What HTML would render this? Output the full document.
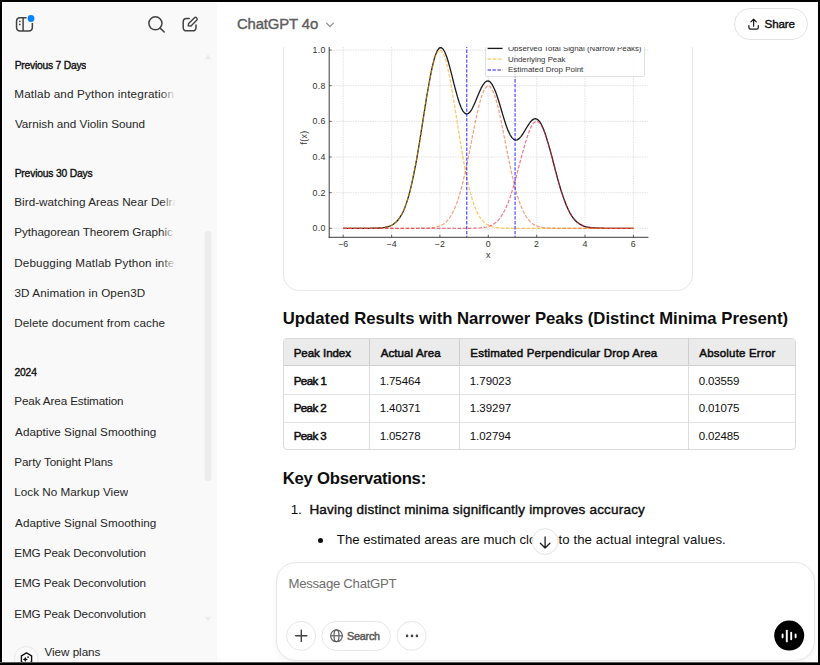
<!DOCTYPE html>
<html><head><meta charset="utf-8">
<style>
*{box-sizing:border-box;margin:0;padding:0}
html,body{width:820px;height:665px;overflow:hidden;background:#000}
body{font-family:"Liberation Sans",sans-serif;position:relative;color:#0d0d0d}
.a{position:absolute;white-space:nowrap}
#frame{left:2px;top:2px;width:816px;height:660px;background:#fff;overflow:hidden}
#side{left:2px;top:2px;width:215px;height:660px;background:#f9f9f9;overflow:hidden;border-left:1px solid #fff;border-top:1px solid #fff}
.sh{font-size:11px;font-weight:700;color:#0d0d0d;left:14.5px;line-height:12px}
.si{font-size:13px;color:#0d0d0d;left:14.5px;line-height:14px}
.fade{position:absolute;left:161px;width:17px;height:20px;background:linear-gradient(90deg,rgba(249,249,249,0),#f9f9f9 88%)}
#hdr{left:217px;top:2px;width:601px;height:45px;background:#fff}
.gr{stroke:#cfcfcf;stroke-width:0.8;stroke-dasharray:.8 .9;fill:none}
.tot{stroke:#1a1a1a;stroke-width:1.3;fill:none;stroke-linejoin:round}
.pk{stroke-width:1.25;fill:none;stroke-dasharray:3.6 1.6;opacity:.62}
.dp{stroke:#0000ff;stroke-width:1.4;stroke-dasharray:3.4 1.5;opacity:.6}
.sp{stroke:#3c3c3c;stroke-width:1}
.tk{stroke:#3c3c3c;stroke-width:.8}
.tl{font-family:"Liberation Sans",sans-serif;font-size:8.8px;letter-spacing:.3px;fill:#333}
.lg{font-family:"Liberation Sans",sans-serif;font-size:7.7px;fill:#333}
h2{font-size:18px;font-weight:700}
table{border-collapse:separate;border-spacing:0}
</style></head><body>
<div id="frame" class="a"></div>

<!-- chart card -->
<div class="a" style="left:283px;top:20px;width:410px;height:271px;border:1px solid #e8e8e8;border-radius:16px;background:#fff"></div>
<svg class="a" style="left:0;top:0" width="820" height="665" viewBox="0 0 820 665">
<line x1="343.2" y1="30" x2="343.2" y2="237.3" class="gr"/>
<line x1="391.6" y1="30" x2="391.6" y2="237.3" class="gr"/>
<line x1="439.9" y1="30" x2="439.9" y2="237.3" class="gr"/>
<line x1="488.3" y1="30" x2="488.3" y2="237.3" class="gr"/>
<line x1="536.7" y1="30" x2="536.7" y2="237.3" class="gr"/>
<line x1="585.0" y1="30" x2="585.0" y2="237.3" class="gr"/>
<line x1="633.4" y1="30" x2="633.4" y2="237.3" class="gr"/>
<line x1="329.2" y1="228.3" x2="648.4" y2="228.3" class="gr"/>
<line x1="329.2" y1="192.7" x2="648.4" y2="192.7" class="gr"/>
<line x1="329.2" y1="157.0" x2="648.4" y2="157.0" class="gr"/>
<line x1="329.2" y1="121.4" x2="648.4" y2="121.4" class="gr"/>
<line x1="329.2" y1="85.7" x2="648.4" y2="85.7" class="gr"/>
<line x1="329.2" y1="50.1" x2="648.4" y2="50.1" class="gr"/>
<path d="M343.2,228.3 L345.0,228.3 L346.8,228.3 L348.7,228.3 L350.5,228.3 L352.3,228.3 L354.1,228.3 L355.9,228.3 L357.7,228.3 L359.5,228.3 L361.4,228.3 L363.2,228.3 L365.0,228.3 L366.8,228.3 L368.6,228.3 L370.4,228.3 L372.2,228.2 L374.0,228.2 L375.9,228.2 L377.7,228.1 L379.5,228.0 L381.3,227.9 L383.1,227.7 L384.9,227.4 L386.7,227.0 L388.6,226.5 L390.4,225.9 L392.2,225.0 L394.0,223.8 L395.8,222.3 L397.6,220.5 L399.4,218.1 L401.3,215.2 L403.1,211.7 L404.9,207.4 L406.7,202.4 L408.5,196.5 L410.3,189.8 L412.1,182.1 L413.9,173.5 L415.8,164.1 L417.6,153.8 L419.4,143.0 L421.2,131.7 L423.0,120.1 L424.8,108.6 L426.6,97.2 L428.5,86.5 L430.3,76.5 L432.1,67.7 L433.9,60.3 L435.7,54.4 L437.5,50.3 L439.3,48.0 L441.1,47.6 L443.0,49.0 L444.8,52.0 L446.6,56.5 L448.4,62.2 L450.2,68.8 L452.0,75.9 L453.8,83.2 L455.7,90.3 L457.5,96.9 L459.3,102.8 L461.1,107.5 L462.9,111.1 L464.7,113.2 L466.5,114.1 L468.4,113.5 L470.2,111.8 L472.0,109.0 L473.8,105.3 L475.6,101.2 L477.4,96.8 L479.2,92.4 L481.0,88.4 L482.9,85.1 L484.7,82.6 L486.5,81.2 L488.3,80.9 L490.1,81.9 L491.9,84.1 L493.7,87.5 L495.6,91.8 L497.4,97.0 L499.2,102.8 L501.0,108.8 L502.8,114.9 L504.6,120.8 L506.4,126.2 L508.2,130.9 L510.1,134.8 L511.9,137.6 L513.7,139.4 L515.5,140.2 L517.3,139.9 L519.1,138.6 L520.9,136.6 L522.8,134.0 L524.6,131.1 L526.4,128.0 L528.2,125.1 L530.0,122.5 L531.8,120.4 L533.6,119.1 L535.5,118.7 L537.3,119.3 L539.1,120.9 L540.9,123.5 L542.7,127.2 L544.5,131.7 L546.3,137.1 L548.1,143.1 L550.0,149.6 L551.8,156.4 L553.6,163.4 L555.4,170.3 L557.2,177.1 L559.0,183.6 L560.8,189.7 L562.7,195.4 L564.5,200.6 L566.3,205.2 L568.1,209.2 L569.9,212.8 L571.7,215.8 L573.5,218.3 L575.3,220.5 L577.2,222.2 L579.0,223.6 L580.8,224.7 L582.6,225.6 L584.4,226.3 L586.2,226.8 L588.0,227.2 L589.9,227.5 L591.7,227.8 L593.5,227.9 L595.3,228.0 L597.1,228.1 L598.9,228.2 L600.7,228.2 L602.6,228.2 L604.4,228.3 L606.2,228.3 L608.0,228.3 L609.8,228.3 L611.6,228.3 L613.4,228.3 L615.2,228.3 L617.1,228.3 L618.9,228.3 L620.7,228.3 L622.5,228.3 L624.3,228.3 L626.1,228.3 L627.9,228.3 L629.8,228.3 L631.6,228.3 L633.4,228.3" class="tot"/>
<path d="M343.2,228.3 L345.0,228.3 L346.8,228.3 L348.7,228.3 L350.5,228.3 L352.3,228.3 L354.1,228.3 L355.9,228.3 L357.7,228.3 L359.5,228.3 L361.4,228.3 L363.2,228.3 L365.0,228.3 L366.8,228.3 L368.6,228.3 L370.4,228.3 L372.2,228.2 L374.0,228.2 L375.9,228.2 L377.7,228.1 L379.5,228.0 L381.3,227.9 L383.1,227.7 L384.9,227.4 L386.7,227.0 L388.6,226.5 L390.4,225.9 L392.2,225.0 L394.0,223.8 L395.8,222.3 L397.6,220.5 L399.4,218.1 L401.3,215.2 L403.1,211.7 L404.9,207.4 L406.7,202.4 L408.5,196.5 L410.3,189.8 L412.1,182.1 L413.9,173.5 L415.8,164.1 L417.6,153.9 L419.4,143.0 L421.2,131.8 L423.0,120.2 L424.8,108.7 L426.6,97.4 L428.5,86.7 L430.3,76.9 L432.1,68.3 L433.9,61.1 L435.7,55.6 L437.5,51.9 L439.3,50.2 L441.1,50.6 L443.0,52.9 L444.8,57.2 L446.6,63.3 L448.4,71.0 L450.2,80.1 L452.0,90.2 L453.8,101.1 L455.7,112.5 L457.5,124.1 L459.3,135.6 L461.1,146.7 L462.9,157.3 L464.7,167.3 L466.5,176.5 L468.4,184.7 L470.2,192.1 L472.0,198.6 L473.8,204.2 L475.6,208.9 L477.4,212.9 L479.2,216.3 L481.0,219.0 L482.9,221.1 L484.7,222.9 L486.5,224.2 L488.3,225.3 L490.1,226.1 L491.9,226.7 L493.7,227.2 L495.6,227.5 L497.4,227.7 L499.2,227.9 L501.0,228.0 L502.8,228.1 L504.6,228.2 L506.4,228.2 L508.2,228.2 L510.1,228.3 L511.9,228.3 L513.7,228.3 L515.5,228.3 L517.3,228.3 L519.1,228.3 L520.9,228.3 L522.8,228.3 L524.6,228.3 L526.4,228.3 L528.2,228.3 L530.0,228.3 L531.8,228.3 L533.6,228.3 L535.5,228.3 L537.3,228.3 L539.1,228.3 L540.9,228.3 L542.7,228.3 L544.5,228.3 L546.3,228.3 L548.1,228.3 L550.0,228.3 L551.8,228.3 L553.6,228.3 L555.4,228.3 L557.2,228.3 L559.0,228.3 L560.8,228.3 L562.7,228.3 L564.5,228.3 L566.3,228.3 L568.1,228.3 L569.9,228.3 L571.7,228.3 L573.5,228.3 L575.3,228.3 L577.2,228.3 L579.0,228.3 L580.8,228.3 L582.6,228.3 L584.4,228.3 L586.2,228.3 L588.0,228.3 L589.9,228.3 L591.7,228.3 L593.5,228.3 L595.3,228.3 L597.1,228.3 L598.9,228.3 L600.7,228.3 L602.6,228.3 L604.4,228.3 L606.2,228.3 L608.0,228.3 L609.8,228.3 L611.6,228.3 L613.4,228.3 L615.2,228.3 L617.1,228.3 L618.9,228.3 L620.7,228.3 L622.5,228.3 L624.3,228.3 L626.1,228.3 L627.9,228.3 L629.8,228.3 L631.6,228.3 L633.4,228.3" class="pk" stroke="#ffa500"/>
<path d="M343.2,228.3 L345.0,228.3 L346.8,228.3 L348.7,228.3 L350.5,228.3 L352.3,228.3 L354.1,228.3 L355.9,228.3 L357.7,228.3 L359.5,228.3 L361.4,228.3 L363.2,228.3 L365.0,228.3 L366.8,228.3 L368.6,228.3 L370.4,228.3 L372.2,228.3 L374.0,228.3 L375.9,228.3 L377.7,228.3 L379.5,228.3 L381.3,228.3 L383.1,228.3 L384.9,228.3 L386.7,228.3 L388.6,228.3 L390.4,228.3 L392.2,228.3 L394.0,228.3 L395.8,228.3 L397.6,228.3 L399.4,228.3 L401.3,228.3 L403.1,228.3 L404.9,228.3 L406.7,228.3 L408.5,228.3 L410.3,228.3 L412.1,228.3 L413.9,228.3 L415.8,228.3 L417.6,228.3 L419.4,228.3 L421.2,228.2 L423.0,228.2 L424.8,228.2 L426.6,228.1 L428.5,228.0 L430.3,227.9 L432.1,227.7 L433.9,227.5 L435.7,227.2 L437.5,226.7 L439.3,226.1 L441.1,225.4 L443.0,224.4 L444.8,223.1 L446.6,221.5 L448.4,219.4 L450.2,217.0 L452.0,213.9 L453.8,210.3 L455.7,206.1 L457.5,201.2 L459.3,195.5 L461.1,189.1 L462.9,182.0 L464.7,174.3 L466.5,165.9 L468.4,157.1 L470.2,148.0 L472.0,138.7 L473.8,129.6 L475.6,120.7 L477.4,112.4 L479.2,104.8 L481.0,98.2 L482.9,92.9 L484.7,89.0 L486.5,86.6 L488.3,85.7 L490.1,86.6 L491.9,89.0 L493.7,92.9 L495.6,98.2 L497.4,104.8 L499.2,112.4 L501.0,120.7 L502.8,129.6 L504.6,138.7 L506.4,148.0 L508.2,157.1 L510.1,165.9 L511.9,174.3 L513.7,182.0 L515.5,189.1 L517.3,195.5 L519.1,201.2 L520.9,206.1 L522.8,210.3 L524.6,213.9 L526.4,217.0 L528.2,219.4 L530.0,221.5 L531.8,223.1 L533.6,224.4 L535.5,225.4 L537.3,226.1 L539.1,226.7 L540.9,227.2 L542.7,227.5 L544.5,227.7 L546.3,227.9 L548.1,228.0 L550.0,228.1 L551.8,228.2 L553.6,228.2 L555.4,228.2 L557.2,228.3 L559.0,228.3 L560.8,228.3 L562.7,228.3 L564.5,228.3 L566.3,228.3 L568.1,228.3 L569.9,228.3 L571.7,228.3 L573.5,228.3 L575.3,228.3 L577.2,228.3 L579.0,228.3 L580.8,228.3 L582.6,228.3 L584.4,228.3 L586.2,228.3 L588.0,228.3 L589.9,228.3 L591.7,228.3 L593.5,228.3 L595.3,228.3 L597.1,228.3 L598.9,228.3 L600.7,228.3 L602.6,228.3 L604.4,228.3 L606.2,228.3 L608.0,228.3 L609.8,228.3 L611.6,228.3 L613.4,228.3 L615.2,228.3 L617.1,228.3 L618.9,228.3 L620.7,228.3 L622.5,228.3 L624.3,228.3 L626.1,228.3 L627.9,228.3 L629.8,228.3 L631.6,228.3 L633.4,228.3" class="pk" stroke="#f26930"/>
<path d="M343.2,228.3 L345.0,228.3 L346.8,228.3 L348.7,228.3 L350.5,228.3 L352.3,228.3 L354.1,228.3 L355.9,228.3 L357.7,228.3 L359.5,228.3 L361.4,228.3 L363.2,228.3 L365.0,228.3 L366.8,228.3 L368.6,228.3 L370.4,228.3 L372.2,228.3 L374.0,228.3 L375.9,228.3 L377.7,228.3 L379.5,228.3 L381.3,228.3 L383.1,228.3 L384.9,228.3 L386.7,228.3 L388.6,228.3 L390.4,228.3 L392.2,228.3 L394.0,228.3 L395.8,228.3 L397.6,228.3 L399.4,228.3 L401.3,228.3 L403.1,228.3 L404.9,228.3 L406.7,228.3 L408.5,228.3 L410.3,228.3 L412.1,228.3 L413.9,228.3 L415.8,228.3 L417.6,228.3 L419.4,228.3 L421.2,228.3 L423.0,228.3 L424.8,228.3 L426.6,228.3 L428.5,228.3 L430.3,228.3 L432.1,228.3 L433.9,228.3 L435.7,228.3 L437.5,228.3 L439.3,228.3 L441.1,228.3 L443.0,228.3 L444.8,228.3 L446.6,228.3 L448.4,228.3 L450.2,228.3 L452.0,228.3 L453.8,228.3 L455.7,228.3 L457.5,228.3 L459.3,228.3 L461.1,228.3 L462.9,228.3 L464.7,228.3 L466.5,228.3 L468.4,228.3 L470.2,228.3 L472.0,228.2 L473.8,228.2 L475.6,228.1 L477.4,228.1 L479.2,228.0 L481.0,227.8 L482.9,227.6 L484.7,227.3 L486.5,227.0 L488.3,226.5 L490.1,225.9 L491.9,225.0 L493.7,224.0 L495.6,222.7 L497.4,221.1 L499.2,219.1 L501.0,216.7 L502.8,213.8 L504.6,210.5 L506.4,206.6 L508.2,202.2 L510.1,197.2 L511.9,191.7 L513.7,185.7 L515.5,179.3 L517.3,172.7 L519.1,165.8 L520.9,158.8 L522.8,152.0 L524.6,145.5 L526.4,139.4 L528.2,133.9 L530.0,129.3 L531.8,125.7 L533.6,123.1 L535.5,121.7 L537.3,121.4 L539.1,122.5 L540.9,124.7 L542.7,128.0 L544.5,132.3 L546.3,137.5 L548.1,143.4 L550.0,149.8 L551.8,156.5 L553.6,163.4 L555.4,170.4 L557.2,177.1 L559.0,183.6 L560.8,189.8 L562.7,195.4 L564.5,200.6 L566.3,205.2 L568.1,209.2 L569.9,212.8 L571.7,215.8 L573.5,218.3 L575.3,220.5 L577.2,222.2 L579.0,223.6 L580.8,224.7 L582.6,225.6 L584.4,226.3 L586.2,226.8 L588.0,227.2 L589.9,227.5 L591.7,227.8 L593.5,227.9 L595.3,228.0 L597.1,228.1 L598.9,228.2 L600.7,228.2 L602.6,228.2 L604.4,228.3 L606.2,228.3 L608.0,228.3 L609.8,228.3 L611.6,228.3 L613.4,228.3 L615.2,228.3 L617.1,228.3 L618.9,228.3 L620.7,228.3 L622.5,228.3 L624.3,228.3 L626.1,228.3 L627.9,228.3 L629.8,228.3 L631.6,228.3 L633.4,228.3" class="pk" stroke="#e92a46"/>
<line x1="466.7" y1="30" x2="466.7" y2="237.3" class="dp"/>
<line x1="515.1" y1="30" x2="515.1" y2="237.3" class="dp"/>
<line x1="329.2" y1="30" x2="329.2" y2="237.8" class="sp"/>
<line x1="328.7" y1="237.3" x2="648.4" y2="237.3" class="sp"/>
<line x1="343.2" y1="237.3" x2="343.2" y2="234.8" class="tk"/>
<text x="343.2" y="246.7" class="tl" text-anchor="middle">−6</text>
<line x1="391.6" y1="237.3" x2="391.6" y2="234.8" class="tk"/>
<text x="391.6" y="246.7" class="tl" text-anchor="middle">−4</text>
<line x1="439.9" y1="237.3" x2="439.9" y2="234.8" class="tk"/>
<text x="439.9" y="246.7" class="tl" text-anchor="middle">−2</text>
<line x1="488.3" y1="237.3" x2="488.3" y2="234.8" class="tk"/>
<text x="488.3" y="246.7" class="tl" text-anchor="middle">0</text>
<line x1="536.7" y1="237.3" x2="536.7" y2="234.8" class="tk"/>
<text x="536.7" y="246.7" class="tl" text-anchor="middle">2</text>
<line x1="585.0" y1="237.3" x2="585.0" y2="234.8" class="tk"/>
<text x="585.0" y="246.7" class="tl" text-anchor="middle">4</text>
<line x1="633.4" y1="237.3" x2="633.4" y2="234.8" class="tk"/>
<text x="633.4" y="246.7" class="tl" text-anchor="middle">6</text>
<line x1="329.2" y1="228.3" x2="331.7" y2="228.3" class="tk"/>
<text x="325.7" y="231.3" class="tl" text-anchor="end">0.0</text>
<line x1="329.2" y1="192.7" x2="331.7" y2="192.7" class="tk"/>
<text x="325.7" y="195.7" class="tl" text-anchor="end">0.2</text>
<line x1="329.2" y1="157.0" x2="331.7" y2="157.0" class="tk"/>
<text x="325.7" y="160.0" class="tl" text-anchor="end">0.4</text>
<line x1="329.2" y1="121.4" x2="331.7" y2="121.4" class="tk"/>
<text x="325.7" y="124.4" class="tl" text-anchor="end">0.6</text>
<line x1="329.2" y1="85.7" x2="331.7" y2="85.7" class="tk"/>
<text x="325.7" y="88.7" class="tl" text-anchor="end">0.8</text>
<line x1="329.2" y1="50.1" x2="331.7" y2="50.1" class="tk"/>
<text x="325.7" y="53.1" class="tl" text-anchor="end">1.0</text>
<text x="488.3" y="257.6" class="tl" text-anchor="middle">x</text>
<text transform="translate(306.6,137.5) rotate(-90)" class="tl" text-anchor="middle">f(x)</text>
<!-- legend -->
<rect x="485.6" y="30" width="159" height="46.6" rx="1.5" fill="#fff" fill-opacity=".8" stroke="#d6d6d6" stroke-width=".8"/>
<line x1="487.6" y1="48.4" x2="502.6" y2="48.4" stroke="#1a1a1a" stroke-width="1.3"/>
<line x1="487.6" y1="59.2" x2="502.6" y2="59.2" stroke="#ffa500" stroke-width="1.25" stroke-dasharray="3.6 1.6" opacity=".62"/>
<line x1="487.6" y1="70" x2="502.6" y2="70" stroke="#0000ff" stroke-width="1.4" stroke-dasharray="3.4 1.5" opacity=".6"/>
<text x="508" y="51.2" class="lg" textLength="133.5" lengthAdjust="spacingAndGlyphs">Observed Total Signal (Narrow Peaks)</text>
<text x="508" y="62" class="lg" textLength="57.5" lengthAdjust="spacingAndGlyphs">Underlying Peak</text>
<text x="508" y="72.4" class="lg" textLength="75.3" lengthAdjust="spacingAndGlyphs">Estimated Drop Point</text>
</svg>

<!-- header -->
<div id="hdr" class="a"></div>
<svg class="a" style="left:324px;top:19px" width="12" height="12" viewBox="0 0 12 12"><path d="M2.6 4.2 L6 7.6 L9.4 4.2" fill="none" stroke="#8a8a8a" stroke-width="1.2" stroke-linecap="round" stroke-linejoin="round"/></svg>
<div class="a" style="left:734px;top:8px;width:74px;height:31.5px;border:1px solid #e3e3e3;border-radius:16px;background:#fff"></div>
<svg class="a" style="left:746px;top:16px" width="16" height="16" viewBox="0 0 16 16"><path d="M7.6 3.4 V10.2 M4.9 5.9 L7.6 3.2 L10.3 5.9 M2.9 9.6 V11.6 Q2.9 13.2 4.5 13.2 H10.7 Q12.3 13.2 12.3 11.6 V9.6" fill="none" stroke="#1a1a1a" stroke-width="1.25" stroke-linecap="round" stroke-linejoin="round"/></svg>

<!-- sidebar -->
<div id="side" class="a"></div>
<div class="a" style="-webkit-text-stroke:0.35px;max-width:161.3px;overflow:hidden;left:14.68px;top:60px;font-size:10.3px;line-height:11px;font-weight:400;color:#0d0d0d;letter-spacing:-0.224px">Previous 7 Days</div>
<div class="a" style="max-width:161.7px;overflow:hidden;left:14.27px;top:87px;font-size:11.7px;line-height:13px;font-weight:400;color:#262626;letter-spacing:0.156px">Matlab and Python integration</div>
<div class="a" style="max-width:161.1px;overflow:hidden;left:14.94px;top:117px;font-size:11.7px;line-height:13px;font-weight:400;color:#262626;letter-spacing:-0.009px">Varnish and Violin Sound</div>
<div class="a" style="-webkit-text-stroke:0.35px;max-width:161.3px;overflow:hidden;left:14.68px;top:168px;font-size:10.3px;line-height:11px;font-weight:400;color:#0d0d0d;letter-spacing:-0.179px">Previous 30 Days</div>
<div class="a" style="max-width:161.7px;overflow:hidden;left:14.27px;top:195px;font-size:11.7px;line-height:13px;font-weight:400;color:#262626;letter-spacing:0.034px">Bird-watching Areas Near Delray</div>
<div class="a" style="max-width:161.7px;overflow:hidden;left:14.27px;top:225px;font-size:11.7px;line-height:13px;font-weight:400;color:#262626;letter-spacing:-0.068px">Pythagorean Theorem Graphic</div>
<div class="a" style="max-width:161.7px;overflow:hidden;left:14.27px;top:256px;font-size:11.7px;line-height:13px;font-weight:400;color:#262626;letter-spacing:0.130px">Debugging Matlab Python integ</div>
<div class="a" style="max-width:161.6px;overflow:hidden;left:14.43px;top:286px;font-size:11.7px;line-height:13px;font-weight:400;color:#262626;letter-spacing:0.101px">3D Animation in Open3D</div>
<div class="a" style="max-width:161.7px;overflow:hidden;left:14.27px;top:316px;font-size:11.7px;line-height:13px;font-weight:400;color:#262626;letter-spacing:0.052px">Delete document from cache</div>
<div class="a" style="-webkit-text-stroke:0.35px;max-width:161.5px;overflow:hidden;left:14.48px;top:367px;font-size:10.3px;line-height:11px;font-weight:400;color:#0d0d0d;letter-spacing:-0.166px">2024</div>
<div class="a" style="max-width:161.7px;overflow:hidden;left:14.27px;top:394px;font-size:11.7px;line-height:13px;font-weight:400;color:#262626;letter-spacing:-0.129px">Peak Area Estimation</div>
<div class="a" style="max-width:161.0px;overflow:hidden;left:15.05px;top:425px;font-size:11.7px;line-height:13px;font-weight:400;color:#262626;letter-spacing:0.038px">Adaptive Signal Smoothing</div>
<div class="a" style="max-width:161.7px;overflow:hidden;left:14.27px;top:455px;font-size:11.7px;line-height:13px;font-weight:400;color:#262626;letter-spacing:-0.100px">Party Tonight Plans</div>
<div class="a" style="max-width:161.7px;overflow:hidden;left:14.27px;top:485px;font-size:11.7px;line-height:13px;font-weight:400;color:#262626;letter-spacing:0.021px">Lock No Markup View</div>
<div class="a" style="max-width:161.0px;overflow:hidden;left:15.05px;top:516px;font-size:11.7px;line-height:13px;font-weight:400;color:#262626;letter-spacing:0.038px">Adaptive Signal Smoothing</div>
<div class="a" style="max-width:161.7px;overflow:hidden;left:14.27px;top:546px;font-size:11.7px;line-height:13px;font-weight:400;color:#262626;letter-spacing:-0.097px">EMG Peak Deconvolution</div>
<div class="a" style="max-width:161.7px;overflow:hidden;left:14.27px;top:576px;font-size:11.7px;line-height:13px;font-weight:400;color:#262626;letter-spacing:-0.097px">EMG Peak Deconvolution</div>
<div class="a" style="max-width:161.7px;overflow:hidden;left:14.27px;top:607px;font-size:11.7px;line-height:13px;font-weight:400;color:#262626;letter-spacing:-0.097px">EMG Peak Deconvolution</div>
<div class="a" style="left:44.54px;top:645px;font-size:11.7px;line-height:13px;font-weight:400;color:#262626;letter-spacing:-0.052px">View plans</div>
<div class="fade" style="top:84px"></div>
<div class="fade" style="top:192px"></div>
<div class="fade" style="top:223px"></div>
<div class="fade" style="top:253px"></div>
<!-- sidebar icons -->
<svg class="a" style="left:10px;top:10px" width="30" height="28" viewBox="10 10 30 28">
<path d="M29 17.75 H20.2 Q16.55 17.75 16.55 21.4 V27.3 Q16.55 30.95 20.2 30.95 H28.7 Q32.35 30.95 32.35 27.3 V23" fill="none" stroke="#424242" stroke-width="1.5" stroke-linecap="round"/>
<line x1="23.1" y1="17.8" x2="23.1" y2="30.9" stroke="#424242" stroke-width="1.5"/>
<circle cx="19.8" cy="21.3" r=".85" fill="#424242"/><circle cx="19.8" cy="24.4" r=".85" fill="#424242"/>
<circle cx="31" cy="18.5" r="4.6" fill="#f9f9f9"/>
<circle cx="31" cy="18.5" r="3.4" fill="#0285ff"/>
</svg>
<svg class="a" style="left:145px;top:12px" width="24" height="24" viewBox="145 12 24 24">
<circle cx="155.4" cy="23.3" r="6.55" fill="none" stroke="#424242" stroke-width="1.5"/>
<line x1="160.2" y1="28.1" x2="164.2" y2="32" stroke="#424242" stroke-width="1.5" stroke-linecap="round"/>
</svg>
<svg class="a" style="left:178px;top:12px" width="24" height="24" viewBox="178 12 24 24">
<path d="M189.3 18.4 H186.6 Q183.2 18.4 183.2 21.8 V27.4 Q183.2 30.8 186.6 30.8 H192.6 Q196 30.8 196 27.4 V25" fill="none" stroke="#424242" stroke-width="1.5" stroke-linecap="round"/>
<path d="M188.2 25.9 L188.6 23.6 L194.3 17.9 Q195.5 16.8 196.7 17.9 Q197.8 19.1 196.7 20.3 L191 26 L188.2 25.9 Z" fill="none" stroke="#424242" stroke-width="1.4" stroke-linejoin="round"/>
</svg>
<!-- scrollbar -->
<svg class="a" style="left:200px;top:50px" width="16" height="580" viewBox="200 50 16 580">
<path d="M204.6 59.3 L208 54.3 L211.4 59.3 Z" fill="#ececec"/>
<rect x="204.5" y="231" width="7" height="250" rx="3.5" fill="#ececec"/>
<path d="M204.8 616.8 L208 621.4 L211.2 616.8 Z" fill="#ececec"/>
</svg>
<!-- view plans -->
<svg class="a" style="left:12px;top:644px" width="30" height="19" viewBox="12 644 30 19">
<circle cx="26.3" cy="658.4" r="11.9" fill="#f9f9f9" stroke="#e9e9e9" stroke-width="1"/>
<path d="M26.5 652.9 L31.6 655.85 V661.75 L26.5 664.7 L21.4 661.75 V655.85 Z" fill="none" stroke="#111" stroke-width="1.35" stroke-linejoin="round"/>
<path d="M25.3 656.8 Q25.7 659 27.9 659.4 Q25.7 659.8 25.3 662 Q24.9 659.8 22.7 659.4 Q24.9 659 25.3 656.8 Z" fill="#111"/>
<circle cx="28.1" cy="657.1" r=".9" fill="#111"/>
</svg>


<!-- content -->
<!-- table -->
<div class="a" style="left:283px;top:338px;width:513px;height:112px;border:1px solid #dadada;border-radius:4px;background:#fff;overflow:hidden">
<div class="a" style="left:0;top:0;width:512px;height:27px;background:#ebebeb;border-bottom:1px solid #cfcfcf"></div>
<div class="a" style="left:0;top:55px;width:512px;height:1px;background:#e3e3e3"></div>
<div class="a" style="left:0;top:83px;width:512px;height:1px;background:#e3e3e3"></div>
<div class="a" style="left:85px;top:0;width:1px;height:112px;background:#dcdcdc"></div>
<div class="a" style="left:175px;top:0;width:1px;height:112px;background:#dcdcdc"></div>
<div class="a" style="left:404px;top:0;width:1px;height:112px;background:#dcdcdc"></div>
<div class="a" style="left:85px;top:0;width:1px;height:26px;background:#cdcdcd"></div>
<div class="a" style="left:175px;top:0;width:1px;height:26px;background:#cdcdcd"></div>
<div class="a" style="left:404px;top:0;width:1px;height:26px;background:#cdcdcd"></div>
</div>
<!-- bullet -->
<div class="a" style="left:317.6px;top:538px;width:5px;height:5px;border-radius:50%;background:#0d0d0d"></div>
<!-- composer -->
<div class="a" style="left:275.5px;top:562px;width:539.5px;height:99px;border:1px solid #e6e6e6;border-radius:20px;background:#fff;box-shadow:0 2px 6px rgba(0,0,0,.05)"></div>
<svg class="a" style="left:280px;top:615px" width="160" height="42" viewBox="280 615 160 42">
<circle cx="301.1" cy="635.9" r="14.5" fill="#fff" stroke="#e6e6e6"/>
<path d="M301.3 630.2 V641.4 M295.7 635.8 H306.9" stroke="#424242" stroke-width="1.4" stroke-linecap="round"/>
<rect x="321.8" y="621.4" width="68.6" height="29" rx="14.5" fill="#fff" stroke="#e6e6e6"/>
<g fill="none" stroke="#5d5d5d" stroke-width="1.2">
<circle cx="336.5" cy="635.8" r="5.9"/>
<ellipse cx="336.5" cy="635.8" rx="2.5" ry="5.9"/>
<line x1="330.6" y1="635.8" x2="342.4" y2="635.8"/>
</g>
<circle cx="411.6" cy="635.9" r="14.5" fill="#fff" stroke="#e6e6e6"/>
<circle cx="407.1" cy="635.9" r="1.3" fill="#424242"/><circle cx="412" cy="635.9" r="1.3" fill="#424242"/><circle cx="416.9" cy="635.9" r="1.3" fill="#424242"/>
</svg>
<svg class="a" style="left:772px;top:618px" width="36" height="36" viewBox="772 618 36 36">
<circle cx="789.2" cy="635.6" r="15" fill="#000"/>
<g stroke="#fff" stroke-width="1.9" stroke-linecap="round">
<line x1="782.6" y1="634.4" x2="782.6" y2="637.2"/>
<line x1="786.8" y1="630.6" x2="786.8" y2="641.4"/>
<line x1="791.2" y1="632.7" x2="791.2" y2="639.3"/>
<line x1="795.6" y1="634.4" x2="795.6" y2="637.2"/>
</g>
</svg>
<div class="a" style="-webkit-text-stroke:0.4px;left:236.95px;top:16px;font-size:14.9px;line-height:16px;font-weight:400;color:#5d5d5d;letter-spacing:-0.134px">ChatGPT 4o</div>
<div class="a" style="-webkit-text-stroke:0.4px;left:764.62px;top:18px;font-size:11.6px;line-height:12px;font-weight:400;color:#0d0d0d;letter-spacing:-0.155px">Share</div>
<div class="a" style="left:282.79px;top:309px;font-size:16.7px;line-height:19px;font-weight:700;color:#0d0d0d;letter-spacing:-0.002px">Updated Results with Narrower Peaks (Distinct Minima Present)</div>
<div class="a" style="-webkit-text-stroke:0.5px;left:293.66px;top:347px;font-size:11.5px;line-height:12px;font-weight:400;color:#0d0d0d;letter-spacing:-0.022px">Peak Index</div>
<div class="a" style="-webkit-text-stroke:0.5px;left:380.65px;top:347px;font-size:11.5px;line-height:12px;font-weight:400;color:#0d0d0d;letter-spacing:0.107px">Actual Area</div>
<div class="a" style="-webkit-text-stroke:0.5px;left:470.33px;top:347px;font-size:11.5px;line-height:12px;font-weight:400;color:#0d0d0d;letter-spacing:0.206px">Estimated Perpendicular Drop Area</div>
<div class="a" style="-webkit-text-stroke:0.5px;left:699.34px;top:347px;font-size:11.5px;line-height:12px;font-weight:400;color:#0d0d0d;letter-spacing:0.191px">Absolute Error</div>
<div class="a" style="-webkit-text-stroke:0.5px;left:293.66px;top:375px;font-size:11.5px;line-height:12px;font-weight:400;color:#0d0d0d;letter-spacing:-0.528px">Peak 1</div>
<div class="a" style="left:379.68px;top:375px;font-size:11.5px;line-height:12px;font-weight:400;color:#0d0d0d;letter-spacing:-0.097px">1.75464</div>
<div class="a" style="left:469.77px;top:375px;font-size:11.5px;line-height:12px;font-weight:400;color:#0d0d0d;letter-spacing:-0.041px">1.79023</div>
<div class="a" style="left:698.65px;top:375px;font-size:11.5px;line-height:12px;font-weight:400;color:#0d0d0d;letter-spacing:-0.139px">0.03559</div>
<div class="a" style="-webkit-text-stroke:0.5px;left:293.66px;top:402px;font-size:11.5px;line-height:12px;font-weight:400;color:#0d0d0d;letter-spacing:-0.572px">Peak 2</div>
<div class="a" style="left:379.68px;top:402px;font-size:11.5px;line-height:12px;font-weight:400;color:#0d0d0d;letter-spacing:-0.093px">1.40371</div>
<div class="a" style="left:469.77px;top:402px;font-size:11.5px;line-height:12px;font-weight:400;color:#0d0d0d;letter-spacing:-0.029px">1.39297</div>
<div class="a" style="left:698.65px;top:402px;font-size:11.5px;line-height:12px;font-weight:400;color:#0d0d0d;letter-spacing:-0.142px">0.01075</div>
<div class="a" style="-webkit-text-stroke:0.5px;left:293.66px;top:430px;font-size:11.5px;line-height:12px;font-weight:400;color:#0d0d0d;letter-spacing:-0.559px">Peak 3</div>
<div class="a" style="left:379.68px;top:430px;font-size:11.5px;line-height:12px;font-weight:400;color:#0d0d0d;letter-spacing:-0.117px">1.05278</div>
<div class="a" style="left:469.77px;top:430px;font-size:11.5px;line-height:12px;font-weight:400;color:#0d0d0d;letter-spacing:-0.068px">1.02794</div>
<div class="a" style="left:698.65px;top:430px;font-size:11.5px;line-height:12px;font-weight:400;color:#0d0d0d;letter-spacing:-0.142px">0.02485</div>
<div class="a" style="left:282.78px;top:469px;font-size:16.7px;line-height:19px;font-weight:700;color:#0d0d0d;letter-spacing:-0.251px">Key Observations:</div>
<div class="a" style="left:290.72px;top:502px;font-size:13.4px;line-height:15px;font-weight:400;color:#0d0d0d;letter-spacing:-0.121px">1.</div>
<div class="a" style="-webkit-text-stroke:0.4px;left:309.42px;top:502px;font-size:13.5px;line-height:15px;font-weight:400;color:#0d0d0d;letter-spacing:0.200px">Having distinct minima significantly improves accuracy</div>
<div class="a" style="left:336.84px;top:532px;font-size:13.2px;line-height:15px;font-weight:400;color:#0d0d0d;letter-spacing:0.006px">The estimated areas are much closer</div>
<div class="a" style="left:558.40px;top:532px;font-size:13.2px;line-height:15px;font-weight:400;color:#0d0d0d;letter-spacing:0.109px">to the actual integral values.</div>
<div class="a" style="left:288.53px;top:576px;font-size:13.2px;line-height:15px;font-weight:400;color:#6e6e6e;letter-spacing:-0.291px">Message ChatGPT</div>
<div class="a" style="-webkit-text-stroke:0.5px;left:347.04px;top:630px;font-size:10.8px;line-height:12px;font-weight:400;color:#5d5d5d;letter-spacing:-0.233px">Search</div>
<!-- scroll down button -->
<svg class="a" style="left:528px;top:525px" width="34" height="34" viewBox="528 525 34 34">
<circle cx="545.1" cy="541.5" r="12.9" fill="#fff" stroke="#e4e4e4" stroke-width="1"/>
<path d="M545.1 537 V547.6 M540.3 543.3 L545.1 548 L549.9 543.3" fill="none" stroke="#1d1d1d" stroke-width="1.3" stroke-linecap="round" stroke-linejoin="round"/>
</svg>
<!-- frame borders on top -->
<div class="a" style="left:0;top:662px;width:820px;height:1px;background:#5a5a5a"></div>
<div class="a" style="left:0;top:663px;width:820px;height:2px;background:#000"></div>
<div class="a" style="left:818px;top:0;width:2px;height:665px;background:#000"></div>

</body></html>
